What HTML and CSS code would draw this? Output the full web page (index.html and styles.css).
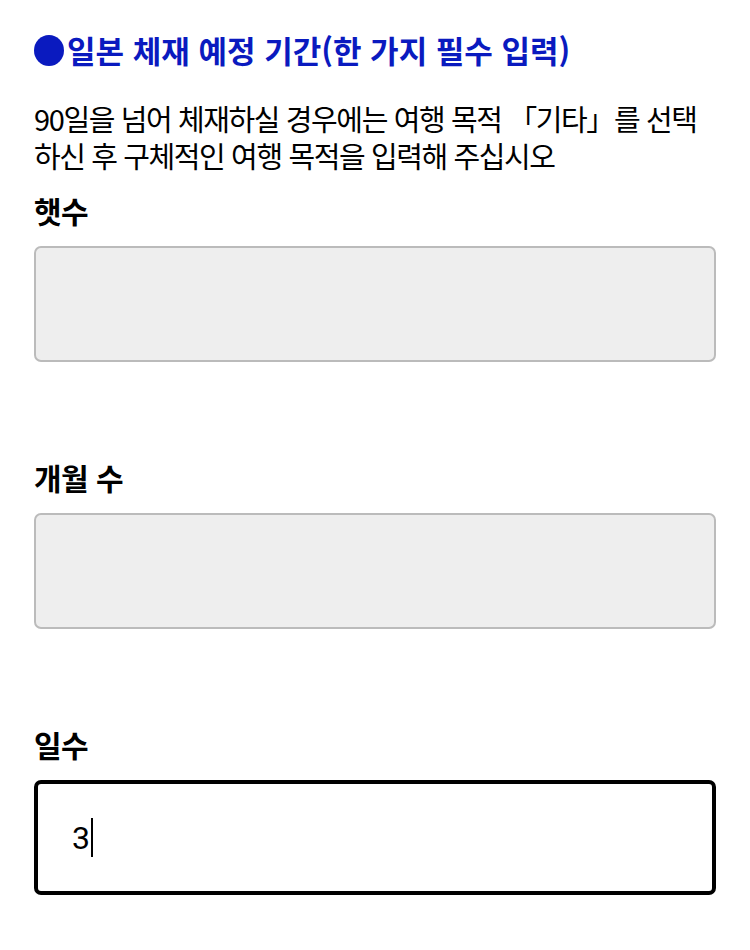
FILE: index.html
```html
<!DOCTYPE html>
<html lang="ko">
<head>
    <meta charset="UTF-8">
    <meta name="viewport" content="width=device-width, initial-scale=1.0">
    <title>일본 체재 예정 기간</title>
    <link rel="stylesheet" href="styles.css">
</head>
<body>
    <div class="container">
        <h2 class="section-title"><span class="dot"></span>일본 체재 예정 기간(한 가지 필수 입력)</h2>
        <p class="note">90일을 넘어 체재하실 경우에는 여행 목적 「기타」를 선택하신 후 구체적인 여행 목적을 입력해 주십시오</p>

        <div class="field">
            <label class="field-label">햇수</label>
            <div class="box"></div>
        </div>

        <div class="field">
            <label class="field-label">개월 수</label>
            <div class="box"></div>
        </div>

        <div class="field">
            <label class="field-label">일수</label>
            <div class="box active"><span class="value">3</span><span class="caret"></span></div>
        </div>
    </div>
</body>
</html>
```

FILE: styles.css
```css
body {
    margin: 0;
    background-color: white;
    color: black;
    font-family: "Noto Sans CJK KR", "Noto Sans", sans-serif;
}
.container {
    padding: 28px 34px 0 34px;
}
.section-title {
    display: flex;
    align-items: center;
    margin: 0;
    font-size: 31px;
    font-weight: bold;
    line-height: 44px;
    color: #0a1abf; /* azul del encabezado */
}
.dot {
    width: 30px;
    height: 31px;
    border-radius: 50%;
    background-color: #0a1abf;
    margin-right: 3px;
    flex-shrink: 0;
}
.note {
    margin: 28px 0 0 0;
    font-size: 29px;
    line-height: 37px;
    letter-spacing: -1.4px;
}
.field-label {
    display: block;
    margin-top: 0;
    font-size: 30px;
    font-weight: bold;
    line-height: 40px;
    letter-spacing: -0.5px;
}
.field {
    margin-bottom: 95px;
}
.note + .field {
    margin-top: 16px;
}
.box {
    box-sizing: border-box;
    height: 116px;
    margin-top: 16px;
    border: 2px solid #bbbbbb;
    border-radius: 7px;
    background-color: #eeeeee;
}
.box.active {
    display: flex;
    align-items: center;
    height: 115px;
    padding-left: 34px;
    border: 4px solid black;
    background-color: white;
}
.value {
    font-family: "Roboto", sans-serif;
    font-size: 32px;
}
.caret {
    width: 2px;
    height: 39px;
    margin-left: 1px;
    background-color: black;
}
```
